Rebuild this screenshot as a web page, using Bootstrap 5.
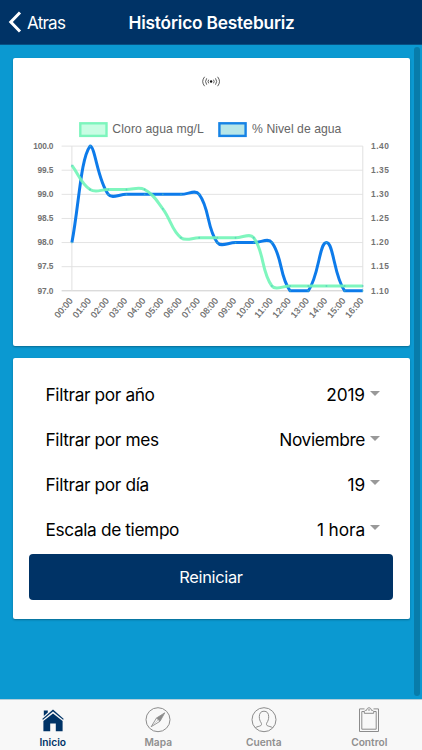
<!DOCTYPE html>
<html lang="es">
<head>
<meta charset="utf-8">
<meta name="viewport" content="width=device-width, initial-scale=1">
<title>Histórico Besteburiz</title>
<link href="https://cdn.jsdelivr.net/npm/bootstrap@5.3.0/dist/css/bootstrap.min.css" rel="stylesheet">
<style>
  body { font-family: Inter, "Liberation Sans", sans-serif; background: #0b99d1; color: #000; overflow: hidden; }
  .screen { height: 750px; width: 422px; }
  .top-bar { height: 45px; background: #003366; border-bottom: 1px solid #075184; }
  .back-link { width: 128.5px; padding-left: 8px; font-size: 17px; letter-spacing: -.75px; gap: 5px; }
  .page-title { font-size: 17.3px; font-weight: 600; letter-spacing: -.18px; padding-top: 2px; }
  .content { padding: 12.5px 12.5px 0; gap: 12.5px; }
  .panel { border: 0; border-radius: 2px; box-shadow: 0 1px 2px rgba(0,0,0,.3); }
  .chart-panel { height: 288px; }
  .filter-panel { height: 260.5px; padding: 15px 16.5px 0; }
  .filter-row { height: 44.8px; padding: 0 13px 0 16.5px; font-size: 17.3px; letter-spacing: -.37px; }
  .filter-row .val { margin-right: 5px; }
  .filter-row .digits { letter-spacing: -.1px; }
  .filter-row svg { margin-top: -4px; }
  .btn-reset { height: 45.5px; margin-top: 2.3px; background: #003366; color: #fff; border: 0; border-radius: 4px; font-size: 16.4px; letter-spacing: -.3px; }
  .btn-reset:hover { background: #002a55; color: #fff; }
  .scroll-thumb { left: 413.5px; top: 47px; width: 6px; height: 649px; border-radius: 3px; background: #087caa; }
  .tab-bar { height: 51px; background: #f8f8f8; border-top: 1px solid #b5cfda; }
  .tab-link { padding-top: 7px; color: #8f8f8f; font-size: 10.2px; font-weight: 600; line-height: 12px; gap: 3px; }
  .tab-link.active { color: #003366; }
  .legend-text { font: 12.2px "Liberation Sans", sans-serif; fill: #666; }
  .tick-text { font: bold 8.4px "Liberation Sans", sans-serif; fill: #737373; }
  .hour-text { font: 8.8px "Liberation Sans", sans-serif; fill: #666; stroke: #666; stroke-width: .2px; }
</style>
<script src="https://cdn.jsdelivr.net/npm/bootstrap@5.3.0/dist/js/bootstrap.bundle.min.js"></script>
</head>
<body>
<div class="screen d-flex flex-column position-relative">
  <header class="top-bar d-flex align-items-center text-white flex-shrink-0">
    <a href="#" class="back-link d-flex align-items-center text-white text-decoration-none">
      <svg width="14" height="22" viewBox="0 0 14 22" fill="none" stroke="#fff" stroke-width="3"><path d="M12 1.5 2.8 11 12 20.5"/></svg>
      <span class="pt-1">Atras</span>
    </a>
    <span class="page-title">Histórico Besteburiz</span>
  </header>

  <main class="content flex-grow-1 d-flex flex-column">
    <section class="card panel chart-panel">
      <svg id="chart" width="397" height="288" viewBox="12.9 57.9 397 288">
        <g fill="none" stroke="#333" stroke-width=".8">
          <path d="M208.6 79.6q-1.3 1.8 0 3.6M206.6 78.2q-2.3 3.2 0 6.4M204.5 76.7q-3.8 4.7 0 9.4M213.4 79.6q1.3 1.8 0 3.6M215.4 78.2q2.3 3.2 0 6.4M217.5 76.7q3.8 4.7 0 9.4"/>
          <circle cx="211" cy="81.4" r="1.2" fill="#111" stroke="none"/>
        </g>
        <rect x="80.2" y="123.2" width="26.2" height="12.6" fill="#c8fde3" stroke="#7df5bd" stroke-width="2.4"/>
        <text class="legend-text" x="112.2" y="133.4" textLength="91.5">Cloro agua mg/L</text>
        <rect x="219.3" y="123.2" width="26.2" height="12.6" fill="#b7e6e8" stroke="#1683e5" stroke-width="2.4"/>
        <text class="legend-text" x="252" y="133.4" textLength="89.3">% Nivel de agua</text>
      </svg>
    </section>

    <section class="card panel filter-panel">
      <div class="filter-row d-flex align-items-center"><span>Filtrar por año</span><span class="val digits ms-auto">2019</span><svg width="10" height="5"><path d="M0 0h10L5 5z" fill="#999"/></svg></div>
      <div class="filter-row d-flex align-items-center"><span>Filtrar por mes</span><span class="val ms-auto">Noviembre</span><svg width="10" height="5"><path d="M0 0h10L5 5z" fill="#999"/></svg></div>
      <div class="filter-row d-flex align-items-center"><span>Filtrar por día</span><span class="val digits ms-auto">19</span><svg width="10" height="5"><path d="M0 0h10L5 5z" fill="#999"/></svg></div>
      <div class="filter-row d-flex align-items-center"><span>Escala de tiempo</span><span class="val digits ms-auto">1 hora</span><svg width="10" height="5"><path d="M0 0h10L5 5z" fill="#999"/></svg></div>
      <button type="button" class="btn btn-reset w-100">Reiniciar</button>
    </section>
  </main>

  <div class="scroll-thumb position-absolute"></div>

  <nav class="tab-bar d-flex flex-shrink-0">
    <a href="#" class="tab-link active flex-fill w-25 d-flex flex-column align-items-center text-decoration-none">
      <svg width="26" height="26" viewBox="0 0 26 26"><path d="M3.4 13.9 13 6.4l9.6 7.5V24.2h-6.8v-7.7h-5.6v7.7H3.4z" fill="#003366"/><path d="M2.2 11.9 13 2.6l10.8 9.3-.8.9L13 4.5 3 12.8z" fill="#003366"/><path d="M3.8 3.5h4v2L3.8 9z" fill="#003366"/></svg>
      <span>Inicio</span>
    </a>
    <a href="#" class="tab-link flex-fill w-25 d-flex flex-column align-items-center text-decoration-none">
      <svg width="26" height="26" viewBox="0 0 26 26" fill="none" stroke="#8c8c8c"><circle cx="13" cy="12.7" r="12"/><path d="M19.8 5.8 15 14.3l-3.5-3.3z" fill="#8c8c8c" stroke-width=".8"/><path d="m11.5 11-5.3 8.7 8.8-5.4" stroke-width=".9"/><path d="m19.8 5.8-13.6 13.9 6.5-6.2z" fill="#8c8c8c" stroke="none"/></svg>
      <span>Mapa</span>
    </a>
    <a href="#" class="tab-link flex-fill w-25 d-flex flex-column align-items-center text-decoration-none">
      <svg width="26" height="26" viewBox="0 0 26 26" fill="none" stroke="#8c8c8c"><circle cx="13" cy="12.7" r="12"/><path d="M4.3 20.7c1.6-1.1 4.2-1.3 5.5-2.1.9-.6.9-1.8.4-2.7-1.3-1.9-1.9-4-1.9-6.2 0-3.5 1.7-5.5 4.7-5.5s4.7 2 4.7 5.5c0 2.2-.6 4.3-1.9 6.2-.5.9-.5 2.1.4 2.7 1.3.8 3.9 1 5.5 2.1"/></svg>
      <span>Cuenta</span>
    </a>
    <a href="#" class="tab-link flex-fill w-25 d-flex flex-column align-items-center text-decoration-none">
      <svg width="26" height="26" viewBox="0 0 26 26" fill="none" stroke="#8c8c8c"><path d="M8.5 1.9h-5v22.6h19V1.9h-5" stroke-width="1"/><path d="M8.2 4.5H5.8v17.7h14.4V4.5h-2.4"/><path d="M8.3 6.3V4.8c0-1 .7-1.4 2.4-1.6 0-1.5 1-2.4 2.3-2.4s2.3.9 2.3 2.4c1.7.2 2.4.6 2.4 1.6v1.5z"/><circle cx="13" cy="2.9" r=".7" stroke-width=".6"/></svg>
      <span>Control</span>
    </a>
  </nav>
</div>
<script>
  const svg = document.getElementById('chart');
  const L = 71.8, R = 362.7, T = 146, B = 290.7, step = (R - L) / 16;
  function add(tag, attrs, text) {
    const el = document.createElementNS('http://www.w3.org/2000/svg', tag);
    for (const k in attrs) el.setAttribute(k, attrs[k]);
    if (text) el.textContent = text;
    svg.appendChild(el);
  }
  for (let i = 0; i < 7; i++) {
    const y = T + (B - T) * i / 6;
    add('path', { d: `M61.5 ${y}H${R}`, stroke: i === 6 ? '#ccc' : '#e3e3e3', 'stroke-width': 1 });
    add('text', { class: 'tick-text', x: 53.4, y: y + 2.8, 'text-anchor': 'end', textLength: i ? 16 : 20.3 }, (100 - i * .5).toFixed(1));
    add('text', { class: 'tick-text', x: 371, y: y + 2.8, textLength: 17.8 }, (1.4 - i * .05).toFixed(2));
  }
  add('path', { d: `M${L} ${T}V${B}M${R} ${T}V${B}`, stroke: '#e0e0e0', 'stroke-width': 1 });
  for (let i = 0; i < 17; i++) {
    add('text', { class: 'hour-text', 'text-anchor': 'end', textLength: 22.8, transform: `translate(${L + i * step + 1.2} ${B + 10.2}) rotate(-50)` }, String(i).padStart(2, '0') + ':00');
  }
  // Smoothed line: control points follow the neighbours' slope and stay inside the plot.
  function curve(values, min, max, color) {
    const p = values.map((v, i) => [L + i * step, B - (v - min) / (max - min) * (B - T)]);
    const clamp = y => Math.max(T, Math.min(B, y));
    const ctrl = p.map((c, i) => {
      const a = p[i - 1] || c, b = p[i + 1] || c;
      const d1 = Math.hypot(c[0] - a[0], c[1] - a[1]), d2 = Math.hypot(b[0] - c[0], b[1] - c[1]);
      const f1 = .4 * d1 / (d1 + d2), f2 = .4 * d2 / (d1 + d2), dx = b[0] - a[0], dy = b[1] - a[1];
      return [c[0] - f1 * dx, clamp(c[1] - f1 * dy), c[0] + f2 * dx, clamp(c[1] + f2 * dy)];
    });
    let d = `M${p[0]}`;
    for (let i = 1; i < p.length; i++) d += `C${ctrl[i - 1][2]} ${ctrl[i - 1][3]} ${ctrl[i][0]} ${ctrl[i][1]} ${p[i]}`;
    add('path', { d, fill: 'none', stroke: color, 'stroke-width': 3, 'stroke-linejoin': 'round' });
    p.forEach(c => add('circle', { cx: c[0], cy: c[1], r: .9, fill: '#4bc0c0', 'fill-opacity': .6 }));
  }
  curve([98, 100, 99, 99, 99, 99, 99, 99, 98, 98, 98, 98, 97, 97, 98, 97, 97], 97, 100, '#0d7bea');
  curve([1.36, 1.31, 1.31, 1.31, 1.31, 1.27, 1.21, 1.21, 1.21, 1.21, 1.21, 1.11, 1.11, 1.11, 1.11, 1.11, 1.11], 1.1, 1.4, 'rgba(113,245,183,.9)');
</script>
</body>
</html>
